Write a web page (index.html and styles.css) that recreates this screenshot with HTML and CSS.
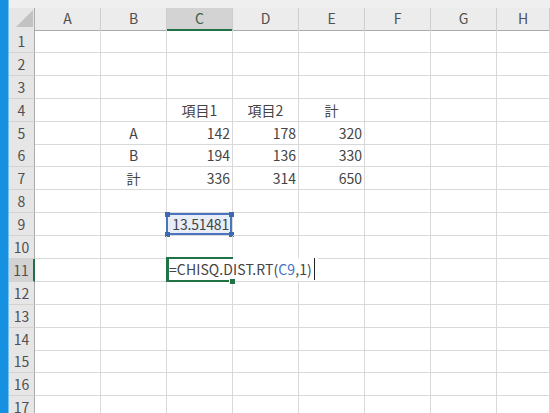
FILE: index.html
```html
<!DOCTYPE html>
<html lang="ja">
<head>
<meta charset="utf-8">
<link rel="stylesheet" href="styles.css">
</head>
<body>
<div class="app">
  <div class="strip"></div>
  <div class="sheet">
    <div class="row head">
      <div class="corner"><svg width="26" height="22" viewBox="0 0 26 22"><polygon points="24,2 24,19 7,19" fill="#c2c2c2"/></svg></div>
      <div class="ch">A</div><div class="ch">B</div><div class="ch sel">C</div><div class="ch">D</div><div class="ch">E</div><div class="ch">F</div><div class="ch">G</div><div class="ch">H</div>
    </div>
    <div class="row"><div class="rh">1</div><div class="c"></div><div class="c"></div><div class="c"></div><div class="c"></div><div class="c"></div><div class="c"></div><div class="c"></div><div class="c"></div></div>
    <div class="row"><div class="rh">2</div><div class="c"></div><div class="c"></div><div class="c"></div><div class="c"></div><div class="c"></div><div class="c"></div><div class="c"></div><div class="c"></div></div>
    <div class="row"><div class="rh">3</div><div class="c"></div><div class="c"></div><div class="c"></div><div class="c"></div><div class="c"></div><div class="c"></div><div class="c"></div><div class="c"></div></div>
    <div class="row"><div class="rh">4</div><div class="c"></div><div class="c"></div><div class="c m">項目1</div><div class="c m">項目2</div><div class="c m">計</div><div class="c"></div><div class="c"></div><div class="c"></div></div>
    <div class="row"><div class="rh">5</div><div class="c"></div><div class="c m">A</div><div class="c r">142</div><div class="c r">178</div><div class="c r">320</div><div class="c"></div><div class="c"></div><div class="c"></div></div>
    <div class="row"><div class="rh">6</div><div class="c"></div><div class="c m">B</div><div class="c r">194</div><div class="c r">136</div><div class="c r">330</div><div class="c"></div><div class="c"></div><div class="c"></div></div>
    <div class="row"><div class="rh">7</div><div class="c"></div><div class="c m">計</div><div class="c r">336</div><div class="c r">314</div><div class="c r">650</div><div class="c"></div><div class="c"></div><div class="c"></div></div>
    <div class="row"><div class="rh">8</div><div class="c"></div><div class="c"></div><div class="c"></div><div class="c"></div><div class="c"></div><div class="c"></div><div class="c"></div><div class="c"></div></div>
    <div class="row"><div class="rh">9</div><div class="c"></div><div class="c"></div>
      <div class="c r">
        <div class="ref">13.51481<span class="hd tl"></span><span class="hd tr"></span><span class="hd bl"></span><span class="hd br"></span></div>
      </div>
      <div class="c"></div><div class="c"></div><div class="c"></div><div class="c"></div><div class="c"></div></div>
    <div class="row"><div class="rh">10</div><div class="c"></div><div class="c"></div><div class="c"></div><div class="c"></div><div class="c"></div><div class="c"></div><div class="c"></div><div class="c"></div></div>
    <div class="row"><div class="rh rsel">11</div><div class="c"></div><div class="c"></div>
      <div class="c edcell">
        <div class="editor">=CHISQ.DIST.RT(<span class="blue">C9</span>,1)<span class="caret"></span></div>
        <div class="edbox"><span class="fill"></span></div>
      </div>
      <div class="c"></div><div class="c"></div><div class="c"></div><div class="c"></div><div class="c"></div></div>
    <div class="row"><div class="rh">12</div><div class="c"></div><div class="c"></div><div class="c"></div><div class="c"></div><div class="c"></div><div class="c"></div><div class="c"></div><div class="c"></div></div>
    <div class="row"><div class="rh">13</div><div class="c"></div><div class="c"></div><div class="c"></div><div class="c"></div><div class="c"></div><div class="c"></div><div class="c"></div><div class="c"></div></div>
    <div class="row"><div class="rh">14</div><div class="c"></div><div class="c"></div><div class="c"></div><div class="c"></div><div class="c"></div><div class="c"></div><div class="c"></div><div class="c"></div></div>
    <div class="row"><div class="rh">15</div><div class="c"></div><div class="c"></div><div class="c"></div><div class="c"></div><div class="c"></div><div class="c"></div><div class="c"></div><div class="c"></div></div>
    <div class="row"><div class="rh">16</div><div class="c"></div><div class="c"></div><div class="c"></div><div class="c"></div><div class="c"></div><div class="c"></div><div class="c"></div><div class="c"></div></div>
    <div class="row"><div class="rh">17</div><div class="c"></div><div class="c"></div><div class="c"></div><div class="c"></div><div class="c"></div><div class="c"></div><div class="c"></div><div class="c"></div></div>
  </div>
</div>
</body>
</html>
```
FILE: styles.css
```css
html, body {
  margin: 0;
  padding: 0;
}
body {
  width: 550px;
  height: 413px;
  overflow: hidden;
  background: #fff;
  font-family: "Noto Sans CJK JP", "Noto Sans", sans-serif;
  color: #444;
}
.app {
  display: flex;
  height: 413px;
}
.strip {
  flex: none;
  width: 8px;
  background: #1690e0;
  border-right: 1px solid #74c0ef;
}
.sheet {
  flex: 1;
  overflow: hidden;
}
.row {
  display: grid;
  grid-template-columns: 26px repeat(7, 66px) 1fr;
  height: 22.9px;
}
.row.head {
  height: 30px;
  background: #efefef;
}
.corner {
  margin-top: 8px;
  background: #e6e6e6;
  border-right: 1px solid #ababab;
  border-bottom: 1px solid #ababab;
  box-sizing: border-box;
}
.corner svg {
  display: block;
}
.ch {
  margin-top: 8px;
  box-sizing: border-box;
  background: #ececec;
  border-right: 1px solid #cdcdcd;
  border-bottom: 1px solid #ababab;
  text-align: center;
  font-size: 14px;
  line-height: 20px;
  color: #505050;
}
.ch.sel {
  background: #d3d3d3;
  border-bottom: 2px solid #217346;
  color: #3b5f48;
}
.rh {
  box-sizing: border-box;
  background: #e6e6e6;
  border-right: 1px solid #ababab;
  border-bottom: 1px solid #d2d2d2;
  text-align: center;
  font-size: 14px;
  line-height: 22px;
  color: #505050;
}
.rh.rsel {
  background: #d3d3d3;
  border-right: 2px solid #217346;
}
.c {
  position: relative;
  box-sizing: border-box;
  border-right: 1px solid #d9d9d9;
  border-bottom: 1px solid #d9d9d9;
  padding: 0 2px;
  font-size: 14px;
  line-height: 22px;
  white-space: nowrap;
}
.m {
  text-align: center;
}
.r {
  text-align: right;
}
.ref {
  position: absolute;
  left: -1px;
  top: 0;
  right: 0;
  bottom: 0;
  border: 2px solid #4a74bb;
  background: #e7eef8;
  text-align: right;
  line-height: 18px;
  padding-right: 1px;
  letter-spacing: -0.2px;
}
.hd {
  position: absolute;
  width: 5px;
  height: 5px;
  background: #3e69ad;
}
.hd.tl { left: -3.5px; top: -3.5px; }
.hd.tr { right: -3.5px; top: -3.5px; }
.hd.bl { left: -3.5px; bottom: -3.5px; }
.hd.br { right: -3.5px; bottom: -3.5px; }
.edcell {
  z-index: 2;
}
.editor {
  position: absolute;
  left: 0;
  top: -1px;
  height: 23px;
  padding: 0 3px 0 2px;
  background: #fff;
  line-height: 23px;
  color: #444;
  white-space: nowrap;
  letter-spacing: 0.1px;
}
.blue {
  color: #4472c4;
}
.caret {
  display: inline-block;
  width: 1px;
  height: 22px;
  margin-left: 2px;
  background: #222;
  vertical-align: top;
}
.edbox {
  position: absolute;
  left: -1px;
  top: -2px;
  width: 67px;
  height: 25px;
  box-sizing: border-box;
  border-top: 2px solid #217346;
  border-bottom: 2px solid #217346;
  border-left: 3px solid #217346;
  pointer-events: none;
}
.fill {
  position: absolute;
  right: -2px;
  bottom: -4px;
  width: 5px;
  height: 5px;
  background: #217346;
  border-left: 1px solid #fff;
  border-top: 1px solid #fff;
}
```
